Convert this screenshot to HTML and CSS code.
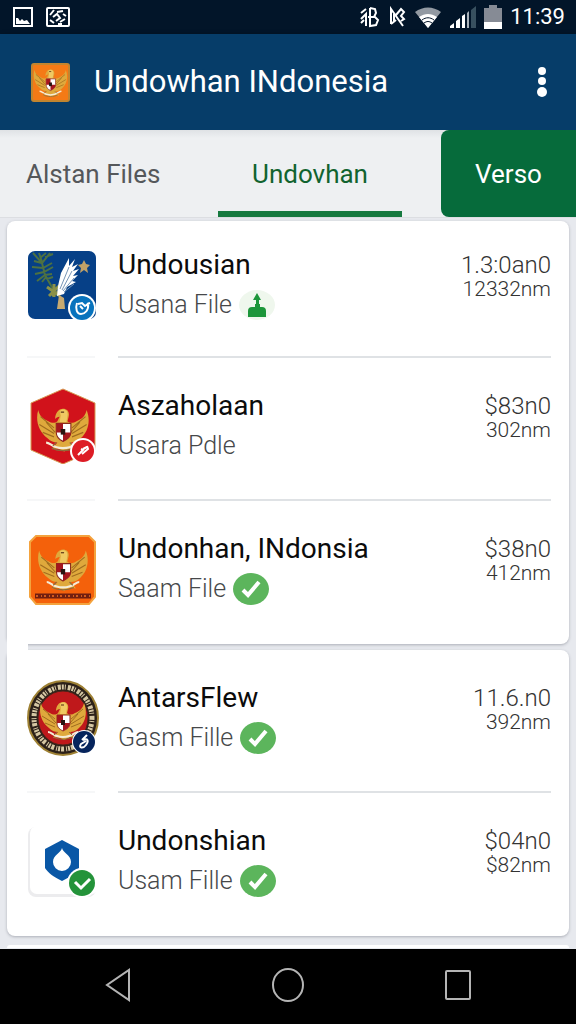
FILE: index.html
```html
<!DOCTYPE html>
<html lang="id">
<head>
    <meta charset="UTF-8">
    <meta name="viewport" content="width=device-width, initial-scale=1.0">
    <title>Undowhan INdonesia</title>
    <link rel="stylesheet" href="styles.css">
</head>
<body>
    <!-- Shared drawings -->
    <svg class="defs" width="0" height="0" aria-hidden="true">
        <symbol id="garuda" viewBox="0 0 48 48">
            <path fill="#dfa93c" d="M2 7c1 5 4 8 9 10 3 2 6 2 8 0l2-4c-2 0-3 1-4 2 0-5 3-9 7-9s6 3 5 7l-1 4c2 2 5 2 8 0 5-2 8-5 9-10 4 10 1 20-5 25-3 3-6 4-9 4l5 6-5-1-6 3-6-3-5 1 5-6c-3 0-6-1-9-4C3 27-1 17 2 7z"/>
            <path fill="none" stroke="#a06d1f" stroke-width="1" d="M4 13l12 10M3 20l13 8M6 27l10 4M9 18l8 9M44 13L32 23M45 20l-13 8M42 27l-10 4M39 18l-8 9"/>
            <path fill="#f0ca62" d="M21 8c3-3 8-1 7 4l-1 6h-6l1-6z"/>
            <path stroke="#4d260f" stroke-width="1" d="M22 9h3"/>
            <path fill="#fff" stroke="#8b2a19" stroke-width="1" d="M18 19h13v8c0 4-3 6-7 8-4-2-6-4-6-8z"/>
            <path fill="#a5161e" d="M18 19h6v8h-6zM24 27h7c0 4-3 6-7 8z"/>
            <path fill="#2a1512" d="M22 24h4v5h-4z"/>
            <path fill="none" stroke="#f4ecd6" stroke-width="2" d="M9 36c4 0 5 5 15 5s11-5 15-5"/>
            <path fill="none" stroke="#8d6b3a" stroke-width="1" d="M14 41c6 3 14 3 20 0M18 36l-3 3M30 36l3 3"/>
        </symbol>
        <symbol id="tick" viewBox="0 0 36 32">
            <ellipse cx="18" cy="16" rx="18" ry="16" fill="#5cb55c"/>
            <path d="M10 17l5 5L26 9" fill="none" stroke="#fff" stroke-width="4"/>
        </symbol>
    </svg>

    <div class="status-bar">
        <div class="status-group">
            <svg width="22" height="20" viewBox="0 0 22 20" aria-label="Picture">
                <path fill="none" stroke="#fff" stroke-width="2" d="M2 1h18v18H2z"/>
                <path fill="#fff" d="M4 17v-6h2l2 3 2-2 2 2 3-1 3 4z"/>
            </svg>
            <svg width="24" height="20" viewBox="0 0 24 20" aria-label="Sync">
                <rect x="1" y="1" width="22" height="18" rx="1" fill="none" stroke="#fff" stroke-width="2"/>
                <path fill="none" stroke="#fff" stroke-width="2" d="M4 8l4-5M11 5l6-1M7 10l4-3 3 4-4 3M17 7l3 2M4 13l4 3M14 15l5-3M12 17h4"/>
            </svg>
        </div>
        <div class="status-group">
            <svg width="20" height="22" viewBox="0 0 20 22" aria-label="Bluetooth">
                <path fill="none" stroke="#fff" stroke-width="2" d="M1 7l5-4M1 13l5-5v12M1 17l3-3M10 2v18l6-1 2-5-3-3H8M10 2l5 1 1 4-2 4"/>
            </svg>
            <svg width="18" height="22" viewBox="0 0 18 22" aria-label="Muted">
                <path fill="none" stroke="#fff" stroke-width="2" d="M3 18V3l12 17M3 18l5-4M8 9l5-6 3 3-3 4 3 3-3 2M6 8v7"/>
            </svg>
            <svg width="28" height="22" viewBox="0 0 28 22" aria-label="Wi-Fi">
                <path fill="#9299a2" d="M1 6c8-6 18-6 26 0L14 22z"/>
                <path fill="#fff" d="M5 11c6-4 12-4 18 0l-9 11z"/>
                <path fill="none" stroke="#051629" stroke-width="1" d="M8 14c4-3 8-3 12 0M10 17c3-2 5-2 8 0"/>
            </svg>
            <svg width="26" height="22" viewBox="0 0 26 22" aria-label="Signal">
                <path fill="#fff" d="M0 22v-2l4-3v5zM6 15l4-3v10H6zM12 10l3-2v14h-3z"/>
                <path fill="#a9b2ba" d="M17 7l2-2v17h-2z"/>
                <path fill="#38505f" d="M21 4l5-4v22h-5z"/>
            </svg>
            <svg class="battery" width="18" height="24" viewBox="0 0 18 24" aria-label="Battery">
                <path fill="#868b95" d="M5 0h8v3h5v21H0V3h5z"/>
                <path fill="#fff" d="M0 17h18v7H0z"/>
            </svg>
            <time class="clock">11:39</time>
        </div>
    </div>

    <header class="app-bar">
        <svg class="app-logo" viewBox="0 0 39 39" aria-hidden="true">
            <rect x="1" y="1" width="37" height="37" rx="2" fill="#f47a16" stroke="#c1852f" stroke-width="2"/>
            <use href="#garuda" x="2" y="2" width="35" height="35"/>
        </svg>
        <h1>Undowhan INdonesia</h1>
        <button class="menu-button" type="button" aria-label="More options">
            <svg width="10" height="32" viewBox="0 0 10 32">
                <circle cx="5" cy="5" r="4" fill="#fff"/>
                <circle cx="5" cy="15" r="4" fill="#fff"/>
                <circle cx="5" cy="26" r="5" fill="#fff"/>
            </svg>
        </button>
    </header>

    <nav class="tabs">
        <button class="tab tab-first" type="button">Alstan Files</button>
        <button class="tab tab-active" type="button">Undovhan</button>
        <button class="tab tab-filled" type="button">Verso</button>
    </nav>

    <main>
        <ul class="card">
            <li class="row">
                <svg class="row-icon" viewBox="0 0 72 76" aria-hidden="true">
                    <rect x="1" y="4" width="68" height="68" rx="7" fill="#064087"/>
                    <path fill="none" stroke="#4d7142" stroke-width="2" d="M6 6l9 10 3 12 8 14M7 14l8 2 8-10M18 10l8-3M12 6l3 9M5 20l11 1 9-5M8 27l9-2 9-5M10 34l8-6 7-1M15 35l4-5M20 32l6-2M13 11l6-5"/>
                    <path fill="none" stroke="#8b9148" stroke-width="3" d="M20 40l13 9M22 49l10-10M27 37v13M34 43l-9 6"/>
                    <path fill="#fff" d="M31 39l3-13 8-15v8l6-7-3 8 6-3-5 7 6-2-6 7 5-1-6 6 4 1-9 5-3 7-7 2z"/>
                    <path fill="none" stroke="#7896b6" stroke-width="1" d="M33 42l9-22M35 43l10-19M36 44l11-13M37 45l10-8"/>
                    <path fill="#c7a970" d="M32 48l5 3 1 11h-8z"/>
                    <path fill="#c2a267" d="M57 13l2 4 4 1-3 3 1 5-4-3-4 3 1-5-3-3 4-1z"/>
                    <circle cx="55" cy="61" r="14" fill="#fff"/>
                    <circle cx="55" cy="61" r="12" fill="#0873bd"/>
                    <path fill="none" stroke="#fff" stroke-width="2" d="M50 56c-2 6 0 11 4 11s8-4 7-10l-3 2-3-3-4 1M53 59l3 3M60 57l3-1"/>
                </svg>
                <div class="row-text">
                    <h2>Undousian</h2>
                    <p>Usana File
                        <svg class="mark" viewBox="0 0 36 32" aria-label="Uploaded">
                            <ellipse cx="18" cy="16" rx="18" ry="15" fill="#eff7ed"/>
                            <path fill="#1c963a" d="M9 28v-6q0-4 4-4h3v-3h1v-4h-3l4-7 4 7h-2v4h1v3h2q4 0 4 4v6z"/>
                        </svg>
                    </p>
                </div>
                <div class="row-meta"><span>1.3:0an0</span><small>12332nm</small></div>
            </li>
            <li class="row">
                <svg class="row-icon" viewBox="0 0 72 76" aria-hidden="true">
                    <path fill="#d1121b" stroke="#d79b55" stroke-width="1" d="M36 1l32 14v47L36 76 4 62V15z"/>
                    <use href="#garuda" x="8" y="14" width="56" height="54"/>
                    <circle cx="56" cy="63" r="13" fill="#fff"/>
                    <circle cx="56" cy="63" r="11" fill="#dd1c25"/>
                    <path fill="none" stroke="#fff" stroke-width="2" d="M51 67l5-5-2-1M55 66l6-5-1-3M56 61l4-2"/>
                </svg>
                <div class="row-text">
                    <h2>Aszaholaan</h2>
                    <p>Usara Pdle</p>
                </div>
                <div class="row-meta"><span>$83n0</span><small>302nm</small></div>
            </li>
            <li class="row">
                <svg class="row-icon" viewBox="0 0 72 76" aria-hidden="true">
                    <path fill="#f4610b" stroke="#f4a33e" stroke-width="2" d="M9 5h53l6 6v55l-6 7H9l-6-7V11z"/>
                    <use href="#garuda" x="9" y="12" width="54" height="52"/>
                    <path stroke="#701f10" stroke-width="5" d="M8 65h56"/>
                    <path stroke="#d35a1c" stroke-width="2" stroke-dasharray="2 3 1 2" d="M9 65h54"/>
                </svg>
                <div class="row-text">
                    <h2>Undonhan, INdonsia</h2>
                    <p>Saam File <svg class="mark" aria-label="Verified"><use href="#tick"/></svg></p>
                </div>
                <div class="row-meta"><span>$38n0</span><small>412nm</small></div>
            </li>
        </ul>

        <ul class="card">
            <li class="row">
                <svg class="row-icon" viewBox="0 0 72 76" aria-hidden="true">
                    <ellipse cx="36" cy="38" rx="35" ry="37" fill="#2c2119" stroke="#9e8134" stroke-width="2"/>
                    <ellipse cx="36" cy="38" rx="29" ry="31" fill="none" stroke="#d6c7a3" stroke-width="5" stroke-dasharray="2 1 1 2 3 1"/>
                    <ellipse cx="36" cy="38" rx="25" ry="27" fill="#bf181b" stroke="#4a2419" stroke-width="1"/>
                    <use href="#garuda" x="12" y="15" width="48" height="50"/>
                    <circle cx="57" cy="62" r="12" fill="#fff"/>
                    <circle cx="57" cy="62" r="11" fill="#06245c"/>
                    <path fill="none" stroke="#fff" stroke-width="2" d="M60 55l-5 5M56 60c5-2 6 1 3 5s-8 3-5-1l5-3"/>
                </svg>
                <div class="row-text">
                    <h2>AntarsFlew</h2>
                    <p>Gasm Fille <svg class="mark" aria-label="Verified"><use href="#tick"/></svg></p>
                </div>
                <div class="row-meta"><span>11.6.n0</span><small>392nm</small></div>
            </li>
            <li class="row">
                <svg class="row-icon" viewBox="0 0 72 76" aria-hidden="true">
                    <rect x="1" y="4" width="68" height="70" rx="8" fill="#ececee"/>
                    <rect x="3" y="3" width="68" height="68" rx="7" fill="#fff"/>
                    <path fill="#0957a6" d="M35 17l17 9v19c-3 5-9 9-17 13-8-4-14-8-17-13V26z"/>
                    <path fill="#fff" d="M35 25c1 5 9 7 9 14a9 9 0 0 1-18 0c0-7 8-9 9-14z"/>
                    <circle cx="55" cy="60" r="15" fill="#fff"/>
                    <circle cx="55" cy="60" r="13" fill="#24933a"/>
                    <path fill="none" stroke="#fff" stroke-width="3" d="M48 59l6 6 9-9"/>
                </svg>
                <div class="row-text">
                    <h2>Undonshian</h2>
                    <p>Usam Fille <svg class="mark" aria-label="Verified"><use href="#tick"/></svg></p>
                </div>
                <div class="row-meta"><span>$04n0</span><small>$82nm</small></div>
            </li>
        </ul>
        <div class="card card-next"></div>
    </main>

    <footer class="nav-bar">
        <button type="button" aria-label="Back">
            <svg width="36" height="36" viewBox="0 0 36 36"><path d="M29 3v30L7 18z"/></svg>
        </button>
        <button type="button" aria-label="Home">
            <svg width="36" height="36" viewBox="0 0 36 36"><ellipse cx="18" cy="18" rx="15" ry="16"/></svg>
        </button>
        <button type="button" aria-label="Recent apps">
            <svg width="36" height="36" viewBox="0 0 36 36"><rect x="6" y="4" width="24" height="28" rx="1"/></svg>
        </button>
    </footer>
</body>
</html>
```
FILE: styles.css
```css
* {
    box-sizing: border-box;
}

body {
    font-family: Roboto, Arial, sans-serif;
    display: flex;
    flex-direction: column;
    min-height: 100vh;
    margin: 0;
    background-color: #e7e9ee;
    color: #0b0b0b;
}

h1, h2, p, ul {
    margin: 0;
    padding: 0;
}

button {
    padding: 0;
    border: none;
    background: none;
    font-family: inherit;
    cursor: pointer;
}

.defs {
    position: absolute;
}

/* Status bar */
.status-bar {
    display: flex;
    justify-content: space-between;
    align-items: center;
    height: 34px;
    padding: 0 11px 0 12px;
    background-color: #021529;
}

.status-group {
    display: flex;
    align-items: center;
    gap: 12px;
}

.status-group + .status-group {
    gap: 8px;
}

.clock {
    color: #fff;
    font-size: 22px;
    line-height: 28px;
}

/* App bar */
.app-bar {
    display: flex;
    align-items: center;
    height: 96px;
    padding: 0 24px 0 31px;
    background-color: #063d69;
    box-shadow: 0 1px 5px rgba(0, 0, 0, 0.3);
}

.app-logo {
    width: 39px;
    height: 39px;
    margin-right: 24px;
}

.app-bar h1 {
    flex: 1;
    color: #fff;
    font-size: 31px;
    font-weight: 400;
    line-height: 40px;
}

.menu-button {
    width: 20px;
    height: 40px;
}

.menu-button svg {
    display: block;
    margin: auto;
}

/* Tabs */
.tabs {
    display: grid;
    grid-template-columns: 218fr 184fr 39fr 135fr;
    height: 88px;
    background: linear-gradient(#dfe2e5, #eef0f2 8px);
    border-bottom: 1px solid #dcdee2;
}

.tab {
    font-size: 26px;
    color: #55585b;
}

.tab-first {
    padding-left: 26px;
    text-align: left;
}

.tab-active {
    color: #11632f;
    border-top: 6px solid transparent;
    border-bottom: 6px solid #177a40;
}

.tab-filled {
    grid-column: 4;
    color: #fff;
    background-color: #066b3b;
    border-radius: 8px 0 0 8px;
}

/* File list */
main {
    flex: 1;
    padding: 3px 7px 0;
}

.card {
    position: relative;
    margin-bottom: 6px;
    background-color: #fff;
    border-radius: 8px;
    box-shadow: 0 1px 3px rgba(60, 65, 80, 0.35);
    list-style: none;
}

/* Bridges the left end of the gap between the cards */
.card:nth-child(2)::before {
    content: "";
    position: absolute;
    top: -14px;
    left: 0;
    width: 21px;
    height: 24px;
    background-color: #fff;
}

.card:nth-child(2) {
    margin-bottom: 9px;
}

.card-next {
    height: 3px;
    margin-bottom: 0;
    border-radius: 4px 4px 0 0;
    box-shadow: none;
}

.row {
    display: flex;
    align-items: flex-start;
    gap: 19px;
    height: 143px;
    margin: 0 18px 0 20px;
    padding-top: 30px;
    background: linear-gradient(90deg, #f6f7f8 68px, #fff 68px, #fff 91px, #dfe2e5 91px) bottom / 100% 2px no-repeat;
}

.row:last-child {
    background: none;
}

.card:first-child .row:first-child {
    height: 137px;
    padding-top: 26px;
}

.row-icon {
    width: 72px;
    height: 76px;
}

.row-text {
    flex: 1;
}

.row-text h2 {
    font-size: 28px;
    font-weight: 400;
    line-height: 36px;
}

.row-text p {
    display: flex;
    align-items: center;
    gap: 7px;
    margin-top: 4px;
    color: #46484a;
    font-size: 25px;
    font-weight: 300;
    line-height: 36px;
}

.mark {
    width: 36px;
    height: 32px;
}

.row-meta {
    display: flex;
    flex-direction: column;
    align-items: flex-end;
    padding-top: 6px;
    color: #333;
    font-weight: 300;
}

.row-meta span {
    font-size: 24px;
    line-height: 24px;
}

.row-meta small {
    font-size: 21px;
    line-height: 24px;
}

/* System navigation */
.nav-bar {
    display: grid;
    grid-template-columns: repeat(3, 170px);
    justify-content: center;
    align-items: center;
    height: 75px;
    background-color: #000;
}

.nav-bar svg {
    fill: none;
    stroke: #b4b4b4;
    stroke-width: 2;
}
```
